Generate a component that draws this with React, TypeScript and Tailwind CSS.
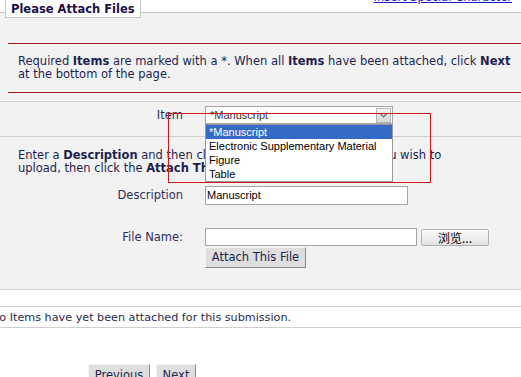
import { ChevronDown } from "lucide-react";

const itemOptions = ["*Manuscript", "Electronic Supplementary Material", "Figure", "Table"];

function OldButton({ label, className = "" }: { label: string; className?: string }) {
  return (
    <button
      type="button"
      className={`border border-t-[#f4f4f4] border-l-[#f4f4f4] border-r-[#8a8a8a] border-b-[#8a8a8a] bg-[#dedede] text-[11.5px] text-[#1f1f4f] ${className}`}
    >
      {label}
    </button>
  );
}

function ItemSelect() {
  return (
    <div className="relative w-[188px]">
      <div className="flex h-[18px] items-center border border-[#a5a5a5] bg-white pl-[4px] font-['Liberation_Sans',Arial,sans-serif] text-[11px] text-[#333333]">
        <span className="flex-1">*Manuscript</span>
        <span className="mr-[1px] flex h-[15px] w-[15px] items-center justify-center border border-[#b8b8b8] bg-gradient-to-b from-[#f4f4f4] to-[#d6d6d6]">
          <ChevronDown size={11} strokeWidth={3} className="text-[#6a6a6a]" />
        </span>
      </div>
      <ul className="absolute left-0 top-full z-10 w-[188px] border border-[#9a9a9a] bg-white font-['Liberation_Sans',Arial,sans-serif] text-[11px] text-black">
        {itemOptions.map((option, index) => (
          <li
            key={option}
            className={`flex h-[14px] items-center pl-[3px] ${index === 0 ? "bg-[#3569c6] text-white" : ""}`}
          >
            {option}
          </li>
        ))}
      </ul>
    </div>
  );
}

export default function App() {
  return (
    <div className="relative h-[377px] w-[521px] overflow-hidden bg-white font-['DejaVu_Sans',Verdana,sans-serif] text-[11.5px] leading-[13px] text-[#1f1f4f]">
      <div className="flex h-[12px] justify-end pr-[9px]">
        <a href="#" className="-mt-[9px] text-[#1a1ad0] underline">
          Insert Special Character
        </a>
      </div>

      <div className="relative border-t border-[#c8c8c8] bg-[#f2f2f2]">
        <div className="absolute -top-[13px] left-[5px] border border-t-0 border-[#c8c8c8] bg-white px-[5px] pb-[1px] pt-[2px] text-[11.5px] font-bold leading-[14px] text-[#1a0f45]">
          Please Attach Files
        </div>

        <div className="pt-[30px]">
          <div className="ml-[8px] border-y border-[#a81a1a] pb-[11px] pl-[10px] pt-[11px]">
            Required <b>Items</b> are marked with a *. When all <b>Items</b> have been attached, click <b>Next</b>
            <br />
            at the bottom of the page.
          </div>
        </div>

        <div className="mt-[8px] border-y border-[#cfcfcf] pb-[12px] pt-[4px]">
          <div className="grid grid-cols-[183px_1fr] items-center gap-x-[22px]">
            <span className="text-right text-[#2e2e5e]">Item</span>
            <ItemSelect />
          </div>
        </div>

        <div className="pl-[18px] pt-[12px]">
          Enter a <b>Description</b> and then click 'Browse' to locate the file you wish to
          <br />
          upload, then click the <b>Attach This File</b> button.
        </div>

        <div className="mt-[11px] grid grid-cols-[183px_1fr] items-center gap-x-[22px] gap-y-[23px] pb-[21px]">
          <span className="text-right text-[#2e2e5e]">Description</span>
          <div className="flex h-[19px] w-[203px] items-center border border-[#a5a5a5] bg-white pl-[1px] font-['Liberation_Sans',Arial,sans-serif] text-[11px] text-black">
            Manuscript
          </div>

          <span className="self-start pt-[3px] text-right text-[#2e2e5e]">File Name:</span>
          <div className="flex flex-col items-start gap-[1px]">
            <div className="flex items-center gap-[4px]">
              <div className="h-[18px] w-[212px] border border-[#a5a5a5] bg-white" />
              <button
                type="button"
                className="flex h-[17px] w-[68px] items-center justify-center rounded-[2px] border border-[#b0b0b0] bg-gradient-to-b from-[#fafafa] to-[#e2e2e2] font-['Noto_Sans_CJK_SC',sans-serif] text-[12px] text-black"
              >
                浏览...
              </button>
            </div>
            <OldButton label="Attach This File" className="h-[21px] w-[101px]" />
          </div>
        </div>
      </div>

      <div className="h-[17px] border-t border-[#cfcfcf]" />
      <div className="-ml-[9px] flex h-[22px] items-center border-y border-[#cfcfcf] text-[11.2px] text-[#2a2a4a]">
        No Items have yet been attached for this submission.
      </div>

      <div className="ml-[88px] mt-[36px] flex gap-[6px]">
        <OldButton label="Previous" className="h-[22px] w-[62px]" />
        <OldButton label="Next" className="h-[22px] w-[40px]" />
      </div>

      <div className="pointer-events-none absolute left-[168px] top-[113px] z-20 h-[70px] w-[263px] border border-[#cc1a1a]" />
    </div>
  );
}
